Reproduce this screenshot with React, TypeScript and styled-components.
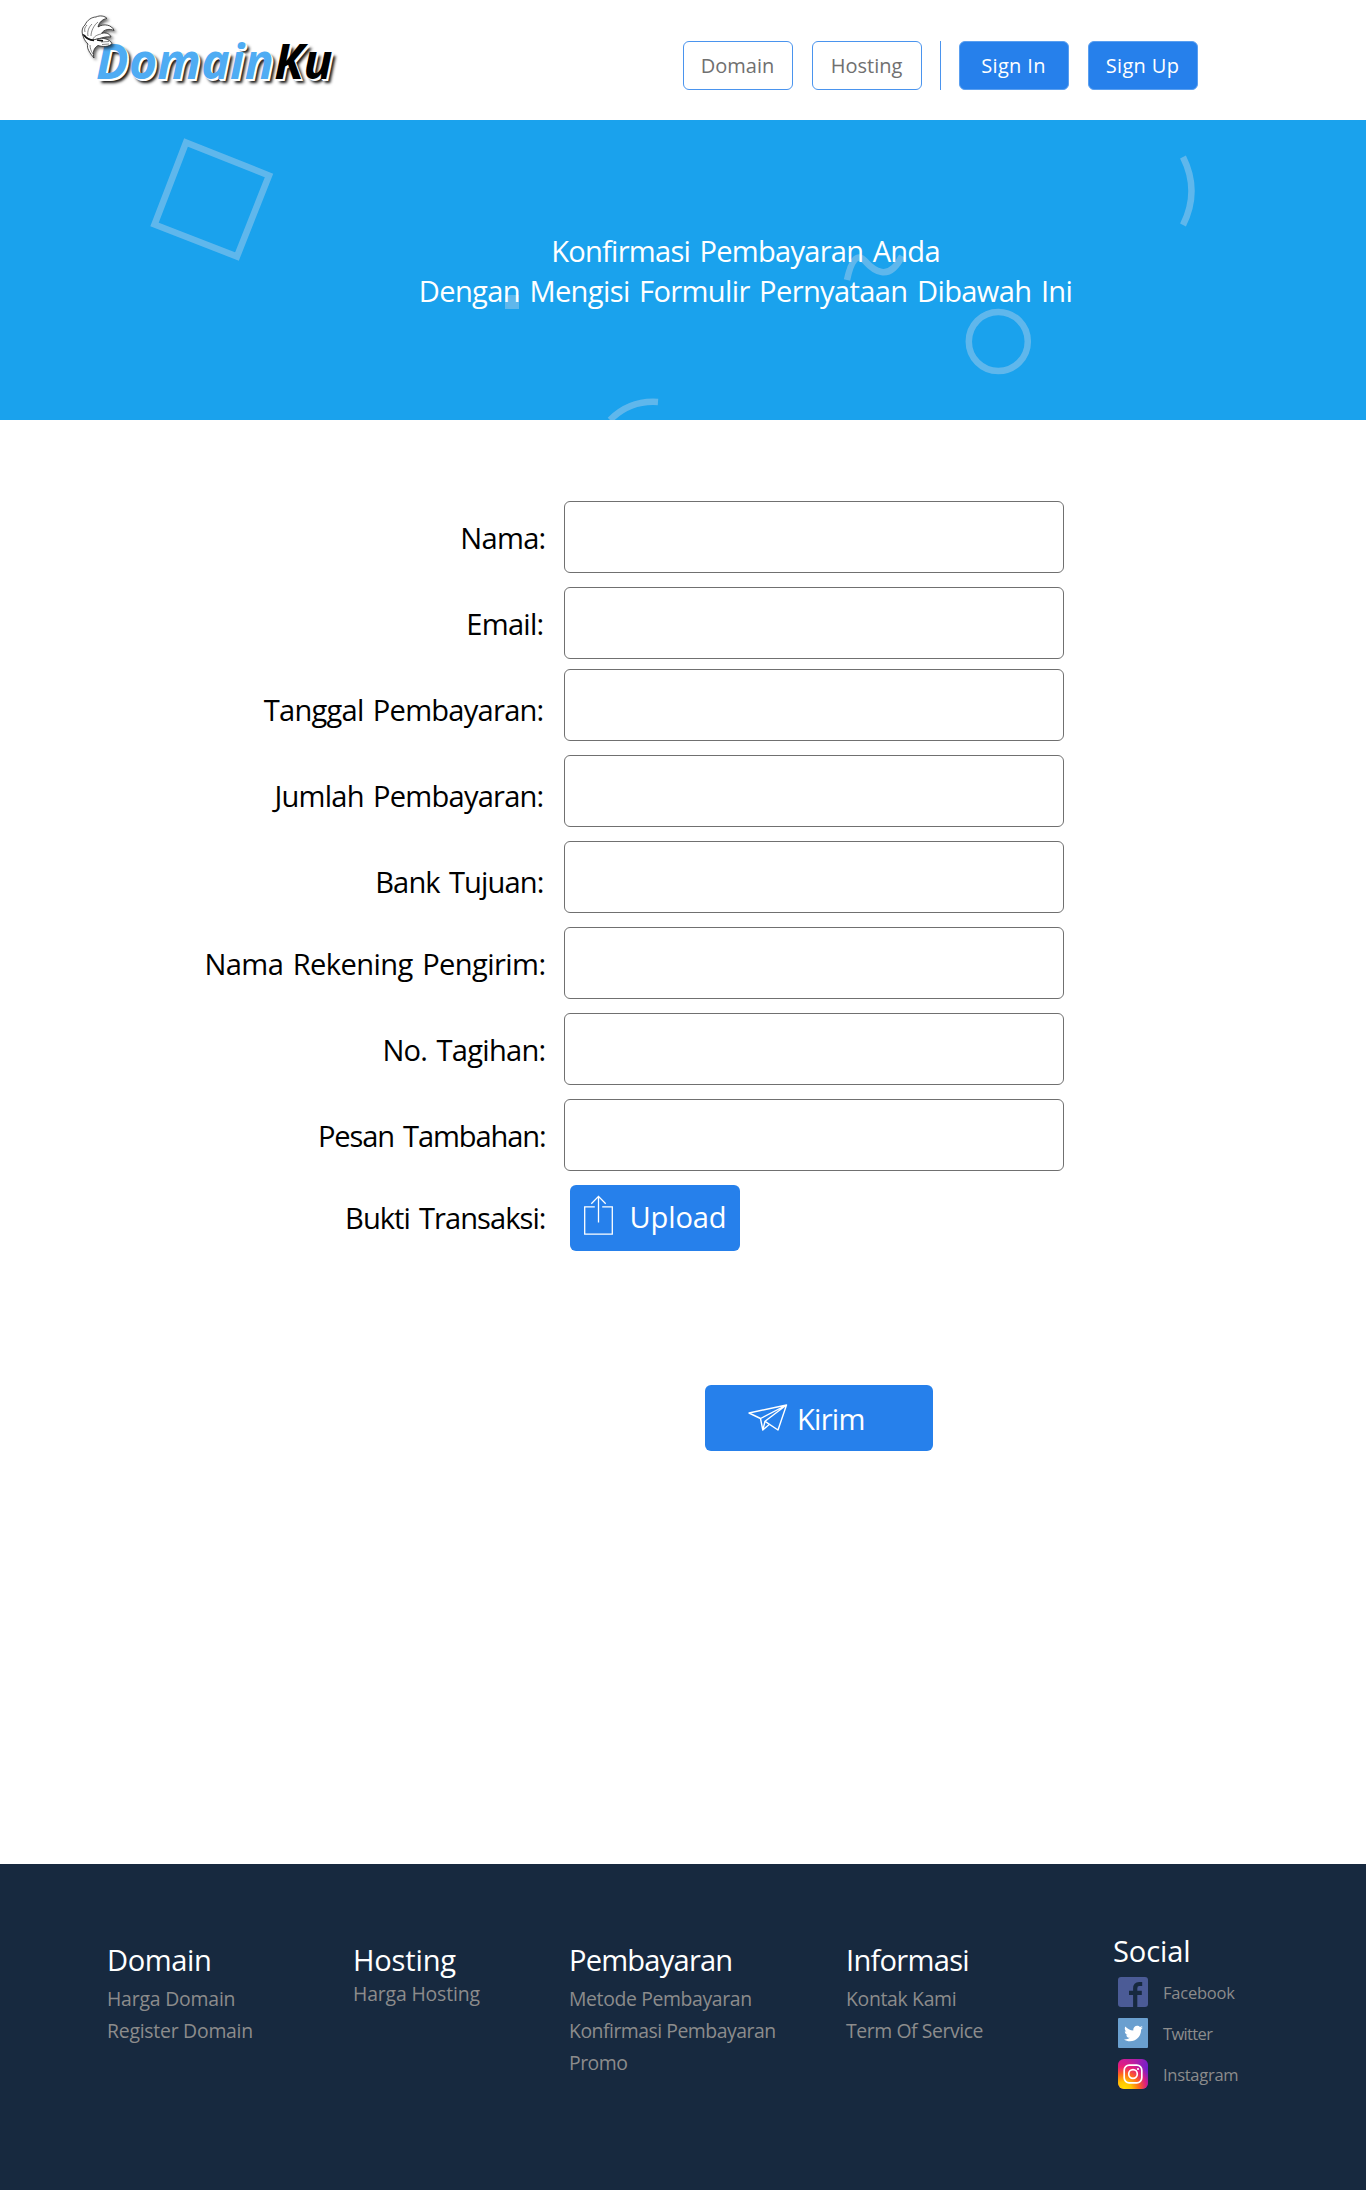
import React from 'react';
import styled, { createGlobalStyle } from 'styled-components';
import { FaTwitter } from 'react-icons/fa';

const blue = '#2680eb';
const navy = '#17293f';
const shapeTint = 'rgba(200, 215, 235, 0.4)';

const GlobalStyle = createGlobalStyle`
  * { box-sizing: border-box; }
  body {
    margin: 0;
    background: #fff;
    font-family: "Open Sans", "Noto Sans", sans-serif;
  }
`;

const Page = styled.div`
  width: 1366px;
  height: 2190px;
  display: flex;
  flex-direction: column;
`;

/* ---------- header ---------- */

const Header = styled.header`
  height: 120px;
  display: flex;
  justify-content: space-between;
  padding: 0 168px 0 96px;
`;

const Logo = styled.a`
  position: relative;
  padding-top: 30px;
  font-size: 48px;
  line-height: 62px;
  font-style: italic;
  font-weight: 700;
  white-space: nowrap;
`;

const LogoWord = styled.span<{ $color: string; $spacing: number }>`
  color: ${(p) => p.$color};
  letter-spacing: ${(p) => p.$spacing}px;
  text-shadow: 1px 1px 0 #fff, 2px 2px 0 #fff, 4px 4px 3px #111;
`;

const LogoBird = styled.svg`
  position: absolute;
  left: -21px;
  top: 8px;
  filter: drop-shadow(2px 2px 1.5px rgba(0, 0, 0, 0.6));
`;

const Nav = styled.nav`
  display: flex;
  gap: 18px;
  height: 49px;
  margin-top: 41px;
`;

const NavGroup = styled.div`
  display: flex;
  gap: 19px;
`;

const NavDivider = styled.div`
  width: 1px;
  background: #4a94ee;
`;

const NavButton = styled.button<{ $filled?: boolean; $spacing: number }>`
  width: 110px;
  height: 49px;
  padding: 1px 1px 0 0;
  border: 1px solid ${(p) => (p.$filled ? '#5a9ff0' : '#4a94ee')};
  border-radius: 6px;
  background: ${(p) => (p.$filled ? blue : '#fff')};
  color: ${(p) => (p.$filled ? '#fff' : '#707070')};
  font: 400 20px/32px "Open Sans", sans-serif;
  letter-spacing: ${(p) => p.$spacing}px;
`;

/* ---------- hero ---------- */

const Hero = styled.section`
  position: relative;
  height: 300px;
  padding: 111px 0 0 125px;
  background: #1aa2ed;
  color: #fff;
  text-align: center;
`;

const HeroShapes = styled.svg`
  position: absolute;
  inset: 0;
`;

const HeroLine = styled.div<{ $spacing: number }>`
  position: relative;
  font-size: 29.1px;
  line-height: 40px;
  letter-spacing: ${(p) => p.$spacing}px;
  word-spacing: 2.5px;
`;

/* ---------- form ---------- */

const Form = styled.form`
  flex: 1;
  padding-top: 81px;
`;

const Row = styled.label<{ $gap?: number }>`
  display: flex;
  margin-bottom: ${(p) => p.$gap ?? 14}px;
`;

const LabelText = styled.span<{ $top: number; $right: number; $spacing: number }>`
  width: 564px;
  padding: ${(p) => p.$top}px ${(p) => p.$right}px 0 0;
  font-size: 29.1px;
  line-height: 40px;
  letter-spacing: ${(p) => p.$spacing}px;
  word-spacing: 2.5px;
  text-align: right;
  color: #000;
`;

const Field = styled.input`
  width: 500px;
  height: 72px;
  padding: 0 16px;
  border: 1px solid #707070;
  border-radius: 6px;
  background: #fff;
  font: 400 26px "Open Sans", sans-serif;
  outline: none;
`;

const ActionButton = styled.button<{ $width: number; $left: number; $top?: number; $pad: number }>`
  display: flex;
  align-items: flex-start;
  width: ${(p) => p.$width}px;
  height: 66px;
  margin: ${(p) => p.$top ?? 0}px 0 0 ${(p) => p.$left}px;
  padding: 0 0 0 ${(p) => p.$pad}px;
  border: 0;
  border-radius: 6px;
  background: ${blue};
  color: #fff;
  font: 400 29.1px/40px "Open Sans", sans-serif;
`;

const ActionIcon = styled.span<{ $top: number }>`
  display: flex;
  padding-top: ${(p) => p.$top}px;
`;

const ActionText = styled.span<{ $top: number; $left: number; $spacing: number }>`
  padding: ${(p) => p.$top}px 0 0 ${(p) => p.$left}px;
  letter-spacing: ${(p) => p.$spacing}px;
`;

/* ---------- footer ---------- */

const Footer = styled.footer`
  display: grid;
  grid-template-columns: 246px 216px 277px 267px 1fr;
  height: 326px;
  padding: 76px 0 0 107px;
  background: ${navy};
  color: #fff;
`;

const Column = styled.div<{ $raise?: number }>`
  margin-top: -${(p) => p.$raise ?? 0}px;
`;

const Heading = styled.h2<{ $spacing: number }>`
  margin: 0;
  font-size: 29.1px;
  font-weight: 400;
  line-height: 40px;
  letter-spacing: ${(p) => p.$spacing}px;
`;

const Links = styled.ul<{ $offset: number }>`
  margin: ${(p) => p.$offset}px 0 0;
  padding: 0;
  list-style: none;
`;

const LinkItem = styled.li<{ $spacing: number }>`
  color: #8c8c8c;
  font-size: 19.4px;
  line-height: 32px;
  letter-spacing: ${(p) => p.$spacing}px;
`;

const SocialList = styled.div`
  display: flex;
  flex-direction: column;
  gap: 11px;
  padding: 6px 0 0 5px;
`;

const SocialLink = styled.a<{ $spacing: number }>`
  display: flex;
  gap: 15px;
  height: 30px;
  color: #8c8c8c;
  font-size: 16.5px;
  line-height: 31px;
  letter-spacing: ${(p) => p.$spacing}px;
`;

const TwitterTile = styled.span`
  display: flex;
  align-items: center;
  justify-content: center;
  width: 30px;
  height: 30px;
  border-radius: 1px;
  background: #6a9fcf;
  color: #fff;
  font-size: 19px;
`;

const BirdMark = () => (
  <LogoBird width="60" height="60" viewBox="0 0 60 60">
    <g fill="#fff" stroke="#222" strokeWidth="0.8" strokeLinejoin="round">
      <path d="M11 31C6 28 6 20 10 17C12 12 17 9 21 9C25 7 30 8 32 10.5C28 11 24 14 23 19C29 15 37 17 39 22.5C35 20.5 29 21 26.5 25.5C31 24 35 26 36 29C31 28 27 30 23 31L15 33Z" />
      <path d="M8 26C8 30 10 33 13 36C11 40 15 45 19 50C17.500 45 18.500 40 23 37.500C28 39 34 39 37 35.500C35 31.500 28 29 22 31C16 33 11 31 8 26Z" />
    </g>
    <g fill="none" stroke="#333" strokeWidth="0.6">
      <path d="M13 28C12 23 14 19 17 16M10 24C9 21 10 19 12 17M16 28C16 23 19 17 23 14M26 26C21 27 19 29 18 31M15 37C15 40 16 43 18 46M26 34L34 33.500M27 36.500L34 36" />
      <path d="M9 27C11 30 15 32 19 32.500M22 32L28 32.800" strokeWidth="1.7" stroke="#111" />
    </g>
  </LogoBird>
);

const UploadIcon = () => (
  <svg width="31" height="42" viewBox="0 0 31 42" fill="none" stroke="#fff" strokeWidth="1.3">
    <path d="M11.8 12.8H1.7V40.2H29.3V12.8H19.2" />
    <path d="M15.5 28.5V2.4M8.3 9.7L15.5 2.4L22.7 9.7" />
  </svg>
);

const PlaneIcon = () => (
  <svg width="40" height="27" viewBox="0 0 40 27" fill="none" stroke="#fff" strokeWidth="1.4" strokeLinejoin="round">
    <path d="M1 9L38.5 1L30 26L17 17.3L38.5 1L12.5 14.5Z" />
    <path d="M12.5 14.5L14.8 26L21.5 20.3M17 17.3L14.8 26" />
  </svg>
);

const FacebookIcon = () => (
  <svg width="30" height="30" viewBox="0 0 30 30">
    <rect width="30" height="30" rx="3" fill="#4b5b96" />
    <path d="M17.2 30V11.5Q17.2 7 21.2 7H24.2M11 15.9H23.8" fill="none" stroke={navy} strokeWidth="4.2" />
  </svg>
);

const InstagramIcon = () => (
  <svg width="30" height="30" viewBox="0 0 30 30">
    <defs>
      <linearGradient id="ig-base" x1="0" y1="0" x2="1" y2="0.4">
        <stop offset="0" stopColor="#d81b8c" />
        <stop offset="0.5" stopColor="#b41fa8" />
        <stop offset="1" stopColor="#6a1fd0" />
      </linearGradient>
      <radialGradient id="ig-glow" cx="0.2" cy="1" r="1">
        <stop offset="0" stopColor="#ffe000" />
        <stop offset="0.25" stopColor="#ffc400" />
        <stop offset="0.5" stopColor="#ff6a1a" />
        <stop offset="0.75" stopColor="#f01e70" stopOpacity="0.85" />
        <stop offset="1" stopColor="#d81b8c" stopOpacity="0" />
      </radialGradient>
    </defs>
    <rect width="30" height="30" rx="6" fill="url(#ig-base)" />
    <rect width="30" height="30" rx="6" fill="url(#ig-glow)" />
    <g fill="none" stroke="#fff" strokeWidth="1.7">
      <rect x="6.2" y="6.2" width="17.6" height="17.6" rx="5" />
      <circle cx="15" cy="15" r="4.3" />
    </g>
    <circle cx="20" cy="10" r="1.1" fill="#fff" />
  </svg>
);

type FieldSpec = { text: string; spacing: number; top?: number; right?: number; gap?: number };

const fields: FieldSpec[] = [
  { text: 'Nama:', spacing: -0.72 },
  { text: 'Email:', spacing: -0.73, right: 20.5, gap: 10 },
  { text: 'Tanggal Pembayaran:', spacing: -0.76, top: 21, right: 20.5 },
  { text: 'Jumlah Pembayaran:', spacing: -0.78, top: 21, right: 20.5 },
  { text: 'Bank Tujuan:', spacing: -0.88, top: 21, right: 20.5 },
  { text: 'Nama Rekening Pengirim:', spacing: -0.59 },
  { text: 'No. Tagihan:', spacing: -0.74 },
  { text: 'Pesan Tambahan:', spacing: -1.12 },
];

const columns: { title: string; spacing: number; offset: number; links: [string, number][] }[] = [
  { title: 'Domain', spacing: -0.41, offset: 3, links: [['Harga Domain', -0.19], ['Register Domain', -0.24]] },
  { title: 'Hosting', spacing: -0.18, offset: -2, links: [['Harga Hosting', -0.15]] },
  {
    title: 'Pembayaran',
    spacing: -0.8,
    offset: 3,
    links: [['Metode Pembayaran', -0.36], ['Konfirmasi Pembayaran', -0.49], ['Promo', -0.5]],
  },
  { title: 'Informasi', spacing: -0.73, offset: 3, links: [['Kontak Kami', -0.32], ['Term Of Service', -0.42]] },
];

export default function App() {
  return (
    <>
      <GlobalStyle />
      <Page>
        <Header>
          <Logo>
            <LogoWord $color="#4facf3" $spacing={0.4}>Domain</LogoWord>
            <LogoWord $color="#000" $spacing={0}>Ku</LogoWord>
            <BirdMark />
          </Logo>
          <Nav>
            <NavGroup>
              <NavButton $spacing={0}>Domain</NavButton>
              <NavButton $spacing={0}>Hosting</NavButton>
            </NavGroup>
            <NavDivider />
            <NavGroup>
              <NavButton $filled $spacing={0.35}>Sign In</NavButton>
              <NavButton $filled $spacing={0.35}>Sign Up</NavButton>
            </NavGroup>
          </Nav>
        </Header>

        <Hero>
          <HeroShapes width="1366" height="300" viewBox="0 0 1366 300" fill="none" stroke={shapeTint} strokeWidth="6.5">
            <path d="M186 22.500L269 55.500L237 136.500L154.500 104.500Z" />
            <path d="M1183 37Q1200 71 1183 105" />
            <path d="M847 160C851 141 857 132 865 141S889 163 902 136" />
            <rect x="505" y="175" width="14" height="14" fill={shapeTint} stroke="none" />
            <circle cx="998.3" cy="221.5" r="29.5" />
            <path d="M610 300Q630 280 658 282" />
          </HeroShapes>
          <HeroLine $spacing={-0.75}>Konfirmasi Pembayaran Anda</HeroLine>
          <HeroLine $spacing={-0.64}>Dengan Mengisi Formulir Pernyataan Dibawah Ini</HeroLine>
        </Hero>

        <Form>
          {fields.map((f) => (
            <Row key={f.text} $gap={f.gap}>
              <LabelText $top={f.top ?? 17} $right={f.right ?? 18.5} $spacing={f.spacing}>
                {f.text}
              </LabelText>
              <Field type="text" />
            </Row>
          ))}
          <Row as="div" $gap={0}>
            <LabelText $top={13} $right={18.5} $spacing={-0.96}>Bukti Transaksi:</LabelText>
            <ActionButton type="button" $width={170} $left={6} $pad={13}>
              <ActionIcon $top={9}><UploadIcon /></ActionIcon>
              <ActionText $top={12} $left={15.5} $spacing={-0.14}>Upload</ActionText>
            </ActionButton>
          </Row>
          <ActionButton type="button" $width={228} $left={705} $top={134} $pad={43}>
            <ActionIcon $top={19}><PlaneIcon /></ActionIcon>
            <ActionText $top={14} $left={9} $spacing={-0.75}>Kirim</ActionText>
          </ActionButton>
        </Form>

        <Footer>
          {columns.map((c) => (
            <Column key={c.title}>
              <Heading $spacing={c.spacing}>{c.title}</Heading>
              <Links $offset={c.offset}>
                {c.links.map(([text, spacing]) => (
                  <LinkItem key={text} $spacing={spacing}>{text}</LinkItem>
                ))}
              </Links>
            </Column>
          ))}
          <Column $raise={9}>
            <Heading $spacing={-0.12}>Social</Heading>
            <SocialList>
              <SocialLink $spacing={-0.22}><FacebookIcon />Facebook</SocialLink>
              <SocialLink $spacing={-0.64}><TwitterTile><FaTwitter /></TwitterTile>Twitter</SocialLink>
              <SocialLink $spacing={-0.28}><InstagramIcon />Instagram</SocialLink>
            </SocialList>
          </Column>
        </Footer>
      </Page>
    </>
  );
}
